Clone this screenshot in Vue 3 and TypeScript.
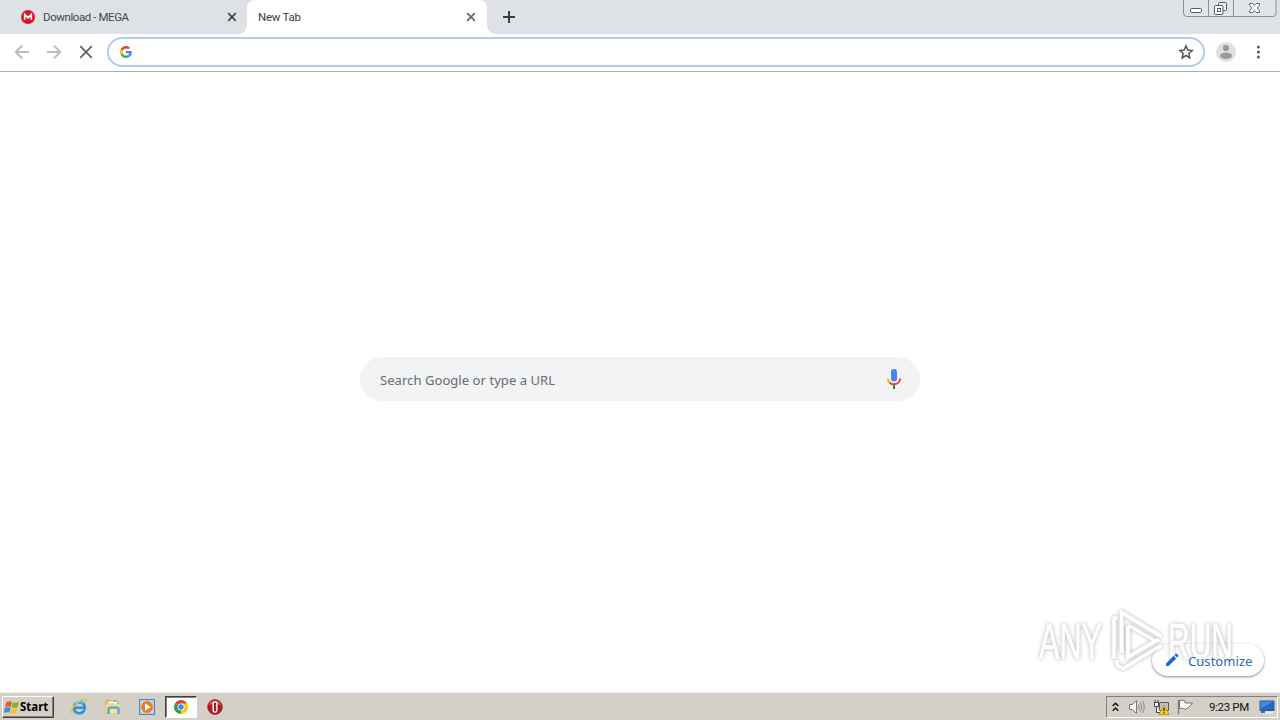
<script setup lang="ts">
interface Tab {
  title: string
  active: boolean
  favicon: boolean
}

const tabs: Tab[] = [
  { title: 'Download - MEGA', active: false, favicon: true },
  { title: 'New Tab', active: true, favicon: false },
]
const searchHint = 'Search Google or type a URL'
const clock = '9:23 PM'
</script>

<template>
  <div class="screen">
    <header class="strip">
      <div v-for="tab in tabs" :key="tab.title" class="tab" :class="{ active: tab.active }">
        <svg v-if="tab.favicon" class="fav" width="14" height="14" viewBox="0 0 14 14">
          <circle cx="7" cy="7" r="7" fill="#dd1421" />
          <path d="M3.7 9.800V4.500L7 7.700l3.300-3.200v5.300" fill="none" stroke="#fff" stroke-width="1.700" />
        </svg>
        <span class="title">{{ tab.title }}</span>
        <svg class="close" width="10" height="10" viewBox="0 0 10 10">
          <path d="M1.200 1.200l7.600 7.600M8.800 1.200L1.200 8.800" stroke-width="1.800" fill="none" />
        </svg>
        <template v-if="tab.active">
          <i class="foot left"></i>
          <i class="foot right"></i>
        </template>
      </div>
      <svg class="plus" width="12" height="12" viewBox="0 0 12 12">
        <path d="M6 0v12M0 6h12" stroke="#3c4045" stroke-width="2" />
      </svg>
      <svg class="winbtns" width="94" height="18" viewBox="0 0 94 18">
        <path d="M.5 0v13q0 3.500 3.500 3.500h86q3 0 3-3.500V0" fill="#e1e4e9" stroke="#8b9097" />
        <path d="M25.500 0v16M50.500 0v16" stroke="#8b9097" />
        <rect x="7.500" y="8.500" width="11" height="4" rx="1" fill="#fff" stroke="#555a62" />
        <rect x="35.500" y="2.500" width="8" height="8" rx="1" fill="#f4f5f7" stroke="#555a62" />
        <rect x="31.500" y="5.500" width="8.500" height="9" rx="1" fill="#fff" stroke="#555a62" />
        <rect x="34.500" y="8.500" width="3" height="3" fill="#fff" stroke="#555a62" />
        <path d="M66.500 3.500h3.200l1.800 2 1.800-2h3.200v1.700L74 8l2.500 2.800v1.700h-3.200l-1.800-2-1.800 2h-3.200v-1.700L69 8l-2.500-2.800z" fill="#fff" stroke="#62676e" />
      </svg>
    </header>

    <div class="toolbar">
      <svg class="nav" width="16" height="16" viewBox="0 0 16 16">
        <path d="M15 8H2M8.200 1.500L1.700 8l6.500 6.500" fill="none" stroke="#babcbe" stroke-width="1.800" />
      </svg>
      <svg class="nav" width="16" height="16" viewBox="0 0 16 16">
        <path d="M1 8h13M7.800 1.500L14.300 8l-6.500 6.500" fill="none" stroke="#babcbe" stroke-width="1.800" />
      </svg>
      <svg class="nav" width="16" height="16" viewBox="0 0 16 16">
        <path d="M2.200 2.200l11.600 11.600M13.800 2.200L2.200 13.800" fill="none" stroke="#606367" stroke-width="1.800" />
      </svg>
      <div class="omnibox">
        <svg width="12" height="12" viewBox="0 0 48 48">
          <path fill="#EA4335" d="M24 9.500c3.540 0 6.710 1.220 9.210 3.600l6.850-6.850C35.900 2.380 30.470 0 24 0 14.620 0 6.510 5.380 2.560 13.220l7.980 6.190C12.430 13.720 17.740 9.500 24 9.500z" />
          <path fill="#4285F4" d="M46.980 24.550c0-1.570-.15-3.090-.38-4.550H24v9.020h12.940c-.58 2.960-2.260 5.480-4.780 7.180l7.730 6c4.510-4.180 7.090-10.360 7.090-17.650z" />
          <path fill="#FBBC05" d="M10.530 28.590c-.48-1.450-.76-2.990-.76-4.590s.27-3.140.76-4.590l-7.980-6.190C.92 16.460 0 20.120 0 24c0 3.880.92 7.540 2.560 10.780l7.970-6.190z" />
          <path fill="#34A853" d="M24 48c6.480 0 11.930-2.130 15.890-5.810l-7.730-6c-2.150 1.450-4.920 2.300-8.160 2.300-6.260 0-11.570-4.220-13.470-9.910l-7.980 6.190C6.510 42.620 14.620 48 24 48z" />
        </svg>
        <svg width="16" height="16" viewBox="0 0 16 16">
          <path d="M8 1.900l1.750 4.200 4.500.4-3.400 3 1 4.400L8 11.500l-3.850 2.400 1-4.400-3.400-3 4.500-.4z" fill="none" stroke="#54585d" stroke-width="1.500" />
        </svg>
      </div>
      <svg class="avatar" width="20" height="20" viewBox="0 0 20 20">
        <circle cx="10" cy="10" r="10" fill="#dfdfdf" />
        <circle cx="10" cy="6" r="3.100" fill="#999" />
        <ellipse cx="10" cy="13.800" rx="6" ry="3.200" fill="#999" />
      </svg>
      <svg class="dots" width="4" height="14" viewBox="0 0 4 14">
        <circle cx="2.400" cy="2" r="1.500" /><circle cx="2.400" cy="7" r="1.500" /><circle cx="2.400" cy="12" r="1.500" />
      </svg>
    </div>

    <main class="page">
      <div class="search">
        <span class="hint">{{ searchHint }}</span>
        <svg width="16" height="22" viewBox="0 0 16 22">
          <rect x="5" y="1" width="6" height="12.500" rx="3" fill="#4285f4" />
          <path d="M1.900 10.500q.1 2.700 1.900 4.300" fill="none" stroke="#f4b400" stroke-width="2" />
          <path d="M3.500 14.400Q5.500 16.300 8 16.300c3.400 0 6-2.500 6.100-5.800" fill="none" stroke="#ea4335" stroke-width="2" />
          <path d="M8 17v4" stroke="#34853f" stroke-width="2" />
        </svg>
      </div>
      <button class="customize">
        <svg width="14" height="14" viewBox="0 0 14 14">
          <path d="M1 10.400L8.600 2.800l2.600 2.600L3.600 13H1zM9.500 1.900l1.100-1.100q.6-.5 1.200 0l1.400 1.400q.5.600 0 1.200l-1.100 1.100z" fill="#1a68cf" />
        </svg>
        <span>Customize</span>
      </button>
    </main>

    <svg class="watermark" width="220" height="80" viewBox="0 0 220 80">
      <g class="mark" fill="none" stroke="#fff">
        <path d="M91.500 50V9.500l40 24M98 23v31l31-18" stroke-width="4" />
        <path d="M98 22l27 16" stroke-width="3" />
        <path d="M88 15h-4v41M87 57v5l6 3.500L132 42" stroke-width="3.500" />
      </g>
      <g class="mark" fill="#fff">
        <text x="9" y="56" textLength="63" lengthAdjust="spacingAndGlyphs">ANY</text>
        <text x="138" y="56" textLength="65" lengthAdjust="spacingAndGlyphs">RUN</text>
      </g>
    </svg>

    <footer class="taskbar">
      <button class="start">
        <svg width="16" height="15" viewBox="0 0 16 15">
          <path d="M2.500 2Q5 .5 8 1.800L6.800 6.900Q4 5.800 1 7.200z" fill="#e95b23" />
          <path d="M8.900 2.200q3 1.100 6.100-.4l-1.300 5.300q-3 1.300-6 .3z" fill="#76b82a" />
          <path d="M.8 8Q3.800 6.800 6.600 7.900l-1.300 4.900Q2.500 11.700-.3 13z" fill="#3c8fdc" />
          <path d="M7.500 8.300q3 1.100 6-.3l-1.300 5.100q-3 1.400-6 .2z" fill="#fbc327" />
        </svg>
        <span>Start</span>
      </button>
      <div class="launch">
        <svg width="18" height="18" viewBox="0 0 18 18">
          <path d="M14.700 11.200q-1.500 4-5.400 4-5.200 0-5.200-5.300 0-5.500 5.300-5.500 5.200 0 5.400 5.400H5" fill="none" stroke="#2795df" stroke-width="2.600" />
          <path d="M2.600 16C-1 14 6 3.500 12.500 1.600q4.200-1 3.700 2.200" fill="none" stroke="#e9b934" stroke-width="1.400" />
          <path d="M5 5.500q4-3.300 8 0" fill="none" stroke="#8ad2fa" />
        </svg>
        <svg width="18" height="18" viewBox="0 0 18 18">
          <path d="M1.500 3.500q0-1 1-1h4l1.300 1.700h6.700v11h-13z" fill="#f1cd62" stroke="#c99d36" stroke-width=".8" />
          <rect x="5" y="3.500" width="8" height="2" fill="#fff" />
          <path d="M9 3h4" stroke="#43a047" />
          <path d="M1.500 6.500h14v9h-14z" fill="#f8e391" />
          <path d="M4.500 16v-4.500q0-2 2-2h6q2 0 2 2V16" fill="none" stroke="#55a9dc" stroke-width="2.500" />
        </svg>
        <svg width="18" height="18" viewBox="0 0 18 18">
          <rect x="1.500" y="1.500" width="15" height="15" fill="#a9cdf0" stroke="#5388be" />
          <rect x="3.500" y="3.500" width="11" height="11" fill="#d8e9f8" />
          <circle cx="9" cy="9" r="5.900" fill="#ee7b0c" />
          <path d="M7 5.300v7.400L13 9z" fill="#fff" />
        </svg>
        <div class="pressed">
          <svg width="16" height="16" viewBox="0 0 16 16">
            <path d="M8 8L1.940 4.500A7 7 0 0 1 14.060 4.500z" fill="#dd4132" />
            <path d="M8 8L14.060 4.500A7 7 0 0 1 8 15z" fill="#fbc817" />
            <path d="M8 8v7A7 7 0 0 1 1.940 4.500z" fill="#2b9c50" />
            <path d="M8 8h-3l3 7 3-5.500zM8 4.500h6.060L15 8l-4 1z" fill="#fbc817" />
            <path d="M8 8H5L2 4.500l3 5.200L8 15z" fill="#2b9c50" />
            <circle cx="8" cy="8" r="3.500" fill="#fff" /><circle cx="8" cy="8" r="2.700" fill="#4389ed" />
          </svg>
        </div>
        <svg class="opera" width="16" height="16" viewBox="0 0 16 16">
          <circle cx="8" cy="8" r="7.400" fill="#b21a20" stroke="#8d1519" stroke-width=".6" />
          <path d="M2 6q1-4.500 6-4.500T14 6q-6-2-12 0z" fill="#d95a59" />
          <rect x="6.200" y="2.900" width="3.600" height="10.200" rx="1.600" fill="#b01a1e" stroke="#fff" stroke-width="1.400" />
        </svg>
      </div>
      <div class="tray">
        <svg width="7" height="10" viewBox="0 0 7 10">
          <path d="M.7 4l2.800-2.700L6.300 4M.7 8.700L3.500 6l2.800 2.700" fill="none" stroke="#111" stroke-width="1.500" />
        </svg>
        <svg class="speaker" width="17" height="16" viewBox="0 0 17 16">
          <path d="M1.500 5.500h2.700L8.500 1.500v13L4.200 10.500H1.500z" fill="#f7f7f5" stroke="#77777a" />
          <path d="M10.500 5.500q1.500 2.500 0 5M12.500 3.500q2.700 4.500 0 9M14.500 2q3.500 6 0 12" fill="none" stroke="#87878a" />
        </svg>
        <svg class="network" width="17" height="17" viewBox="0 0 17 17">
          <path d="M6.500 3.500h9v8h-9z" fill="#bcc3c8" stroke="#55585a" />
          <path d="M2 1v3M5 1v3M1.500 3.500h4v4h-4zM3.500 8v5.500H8" fill="#fff" stroke="#444" />
          <path d="M11 6l5 9.500H6z" fill="#f9d71d" stroke="#b88c10" stroke-width=".8" />
          <path d="M11 8.800v3.400M11 13.200v1.200" stroke="#222" stroke-width="1.300" />
        </svg>
        <svg class="flag" width="17" height="16" viewBox="0 0 17 16">
          <path d="M1.500 1v14" stroke="#7e7e80" stroke-width="1.400" />
          <path d="M2.500 1.500q3-1 5.500.5v2h7.500L12 8 8.500 10.500Q6 8.500 2.500 9.500z" fill="#fafafa" stroke="#737375" />
        </svg>
        <span class="clock">{{ clock }}</span>
        <svg class="desktop" width="16" height="14" viewBox="0 0 16 14">
          <path d="M1 1h14v9.500H1z" fill="#2468be" stroke="#285a9b" />
          <path d="M1.500 1.500h13L1.500 9z" fill="#468bd8" />
          <path d="M4 12.500h10" stroke="#e8eaf0" stroke-width="2" /><path d="M2 12h4" stroke="#30455f" stroke-width="1.500" />
        </svg>
      </div>
    </footer>
  </div>
</template>

<style>
body { overflow: hidden; background: #fff; }
</style>

<style scoped>
.screen { position: relative; display: flex; flex-direction: column; width: 1280px; height: 720px; font-family: "Noto Sans", "DejaVu Sans", sans-serif; }
.screen * { box-sizing: border-box; }
svg { display: block; flex: none; }
button { border: 0; font: inherit; padding: 0; margin: 0; }
.strip { display: flex; height: 34px; background: #dee1e6; }
.tab { position: relative; display: flex; align-items: center; width: 240px; height: 34px; padding: 0 11px; font: 11.500px Roboto, sans-serif; color: #45484d; }
.tab:first-child { width: 247px; padding: 0 10px 0 21px; }
.tab.active { background: #fff; border-radius: 8px 8px 0 0; color: #3c4043; }
.fav { margin-right: 8px; }
.title { flex: 1; white-space: nowrap; letter-spacing: -.42px; }
.active .title { letter-spacing: -.25px; }
.close { stroke: #44484e; }
.active .close { stroke: #66696d; }
.foot { position: absolute; bottom: 0; width: 8px; height: 8px; }
.left { left: -8px; background: radial-gradient(circle at 0 0, transparent 7.500px, #fff 8px); }
.right { right: -8px; background: radial-gradient(circle at 100% 0, transparent 7.500px, #fff 8px); }
.plus { margin: 11px 0 0 16px; }
.winbtns { margin-left: auto; margin-right: 3px; }
.toolbar { display: flex; align-items: center; height: 38px; padding: 0 20px 2px 14px; background: #fff; border-bottom: 1px solid #abafb3; }
.nav { margin-right: 16px; }
.nav:nth-child(3) { margin-right: 13px; }
.omnibox { display: flex; align-items: center; justify-content: space-between; width: 1098px; height: 30px; border: 2px solid #b5cbe9; border-radius: 15px; padding: 0 9px 0 11px; }
.avatar { margin-left: 11px; }
.dots { margin-left: auto; fill: #56595d; }
.page { display: flex; flex-direction: column; flex: 1; padding: 285px 16px 16px; border-bottom: 1px solid #e8e6e1; }
.search { display: flex; align-items: center; justify-content: space-between; align-self: center; width: 560px; height: 44px; padding: 0 18px 0 20px; border-radius: 22px; background: #f1f3f4; }
.hint { font-size: 13px; letter-spacing: .06px; color: #686c70; padding-top: 2px; }
.customize { display: flex; align-items: center; align-self: flex-end; width: 112px; height: 32px; margin-top: auto; padding-left: 13px; border-radius: 16px; background: #fff; color: #2569c0; font-size: 13px; box-shadow: 0 1px 3px rgba(0, 0, 0, .38), 0 1px 2px rgba(0, 0, 0, .1); }
.customize span { margin-left: 9px; letter-spacing: .05px; padding-top: 2px; }
.customize > * { position: relative; z-index: 2; }
.watermark { position: absolute; left: 1030px; top: 603px; z-index: 1; pointer-events: none; opacity: .8; }
.watermark text { font: 50px "Liberation Sans", sans-serif; stroke: #fff; stroke-width: .7px; }
.mark { filter: drop-shadow(0 0 2.200px rgba(0, 0, 0, .32)) drop-shadow(0 0 1px rgba(0, 0, 0, .08)); }
.taskbar { display: flex; align-items: center; height: 27px; padding: 1px 2px 0; background: #d4d0c8; }
.start { display: flex; align-items: center; width: 52px; height: 22px; padding-left: 1px; background: #d4d0c8; border: 1px solid; border-color: #fff #404040 #404040 #fff; box-shadow: inset -1px -1px #808080; font: bold 11.500px "Noto Sans", sans-serif; color: #000; }
.start span { letter-spacing: 0; line-height: 16px; margin-top: -1px; }
.launch { display: flex; align-items: center; margin-left: 17px; }
.launch > svg { margin-right: 16px; }
.launch > svg:first-child { margin-left: -1px; }
.launch > svg:nth-child(3) { margin-right: 9px; }
.pressed { display: flex; align-items: center; justify-content: center; width: 32px; height: 22px; background: #fff; border: 1px solid; border-color: #404040 #fff #fff #404040; box-shadow: inset 1px 1px #808080; }
.launch > .opera { margin: 0 0 0 10px; }
.tray { display: flex; align-items: center; width: 172px; height: 22px; margin-left: auto; border: 1px solid; border-color: #808080 #fff #fff #808080; padding-left: 5px; }
.speaker { margin-left: 9px; }
.network { margin-left: 8px; }
.flag { margin-left: 7px; }
.clock { margin-left: 15px; width: 40px; white-space: nowrap; font: 11.500px Roboto, sans-serif; letter-spacing: -.35px; color: #111; }
.desktop { margin-left: 10px; }
</style>
